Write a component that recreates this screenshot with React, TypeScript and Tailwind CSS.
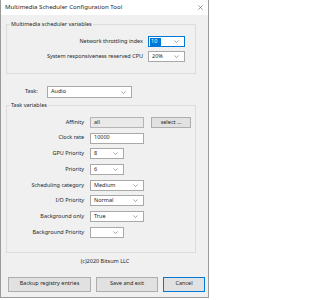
import React from "react";

const font = { fontFamily: '"Noto Sans", "Open Sans", sans-serif' };

function Chevron() {
  return (
    <svg width="5" height="3" viewBox="0 0 5 3" className="shrink-0">
      <path d="M0.5 0.5 L2.5 2.5 L4.5 0.5" fill="none" stroke="#666" strokeWidth="0.6" />
    </svg>
  );
}

function Select({ value, w, focused = false }: { value: string; w: string; focused?: boolean }) {
  return (
    <div
      className={`${w} h-[11px] bg-white border flex items-center justify-between pl-[1px] pr-[5px] ${
        focused ? "border-[#0078d7]" : "border-[#a9a9a9]"
      }`}
    >
      {focused ? (
        <span className="bg-[#0078d7] text-white px-[1px] h-[8px] w-[11px] flex items-center leading-none">{value}</span>
      ) : (
        <span className="pl-[2px] leading-none">{value}</span>
      )}
      <Chevron />
    </div>
  );
}

function Row({ label, children }: { label: string; children: React.ReactNode }) {
  return (
    <div className="flex items-center h-[11px]">
      <div className="w-[77px] text-right leading-none">{label}</div>
      <div className="ml-[6px] flex items-center gap-[7px]">{children}</div>
    </div>
  );
}

export default function App() {
  return (
    <div className="w-[210px] h-[300px] bg-white text-[5.5px] text-[#262626]" style={font}>
      <div className="w-[209px] h-[298px] flex flex-col border-l border-r border-b border-[#9a9a9a] bg-[#f0f0f0]">
        <div className="h-[15px] bg-white flex items-center justify-between pl-[4px] pr-[5px] shrink-0">
          <span className="text-[6.1px] leading-none">Multimedia Scheduler Configuration Tool</span>
          <svg width="5" height="5" viewBox="0 0 5 5">
            <path d="M0.3 0.3 L4.7 4.7 M4.7 0.3 L0.3 4.7" stroke="#444" strokeWidth="0.5" />
          </svg>
        </div>
        <div className="flex flex-col pl-[5px]">
          <div className="relative mt-[9px] w-[190px] h-[50px] border border-[#dcdcdc] pt-[11px] pr-[10px] flex flex-col items-end gap-[4px]">
            <span className="absolute -top-[3px] left-[3px] bg-[#f0f0f0] px-[1px] leading-none">
              Multimedia scheduler variables
            </span>
            <div className="flex items-center gap-[5px]">
              <span className="leading-none">Network throttling index</span>
              <Select value="10" w="w-[37px]" focused />
            </div>
            <div className="flex items-center gap-[5px]">
              <span className="leading-none">System responsiveness reserved CPU</span>
              <Select value="20%" w="w-[37px]" />
            </div>
          </div>

          <div className="flex items-center mt-[12px] h-[12px]">
            <span className="ml-[19px] w-[22px] leading-none">Task:</span>
            <div className="w-[85px] h-[12px] bg-white border border-[#a9a9a9] flex items-center justify-between pl-[3px] pr-[5px]">
              <span className="leading-none">Audio</span>
              <Chevron />
            </div>
          </div>

          <div className="relative mt-[7px] w-[190px] h-[148px] border border-[#dcdcdc] pt-[11px] flex flex-col gap-[4.7px]">
            <span className="absolute -top-[3px] left-[3px] bg-[#f0f0f0] px-[1px] leading-none">Task variables</span>
            <Row label="Affinity">
              <div className="w-[54px] h-[11px] bg-[#e9e9e9] border border-[#b5b5b5] flex items-center pl-[3px] leading-none">
                all
              </div>
              <div className="w-[40px] h-[11px] bg-[#e1e1e1] border border-[#adadad] flex items-center justify-center leading-none">
                select ...
              </div>
            </Row>
            <Row label="Clock rate">
              <div className="w-[54px] h-[11px] bg-white border border-[#a9a9a9] flex items-center pl-[3px] leading-none">
                10000
              </div>
            </Row>
            <Row label="GPU Priority">
              <Select value="8" w="w-[34px]" />
            </Row>
            <Row label="Priority">
              <Select value="6" w="w-[34px]" />
            </Row>
            <Row label="Scheduling category">
              <Select value="Medium" w="w-[54px]" />
            </Row>
            <Row label="I/O Priority">
              <Select value="Normal" w="w-[54px]" />
            </Row>
            <Row label="Background only">
              <Select value="True" w="w-[54px]" />
            </Row>
            <Row label="Background Priority">
              <Select value="" w="w-[34px]" />
            </Row>
          </div>

          <div className="w-[198px] text-center mt-[6px] leading-none">(c)2020 Bitsum LLC</div>

          <div className="flex items-center gap-[5px] mt-[12px] pl-[2px]">
            <div className="w-[83px] h-[15px] bg-[#e1e1e1] border border-[#adadad] flex items-center justify-center leading-none">
              Backup registry entries
            </div>
            <div className="w-[62px] h-[15px] bg-[#e1e1e1] border border-[#adadad] flex items-center justify-center leading-none">
              Save and exit
            </div>
            <div className="w-[42px] h-[15px] bg-[#e1e1e1] border-[1.5px] border-[#0078d7] flex items-center justify-center leading-none">
              Cancel
            </div>
          </div>
        </div>
      </div>
    </div>
  );
}
